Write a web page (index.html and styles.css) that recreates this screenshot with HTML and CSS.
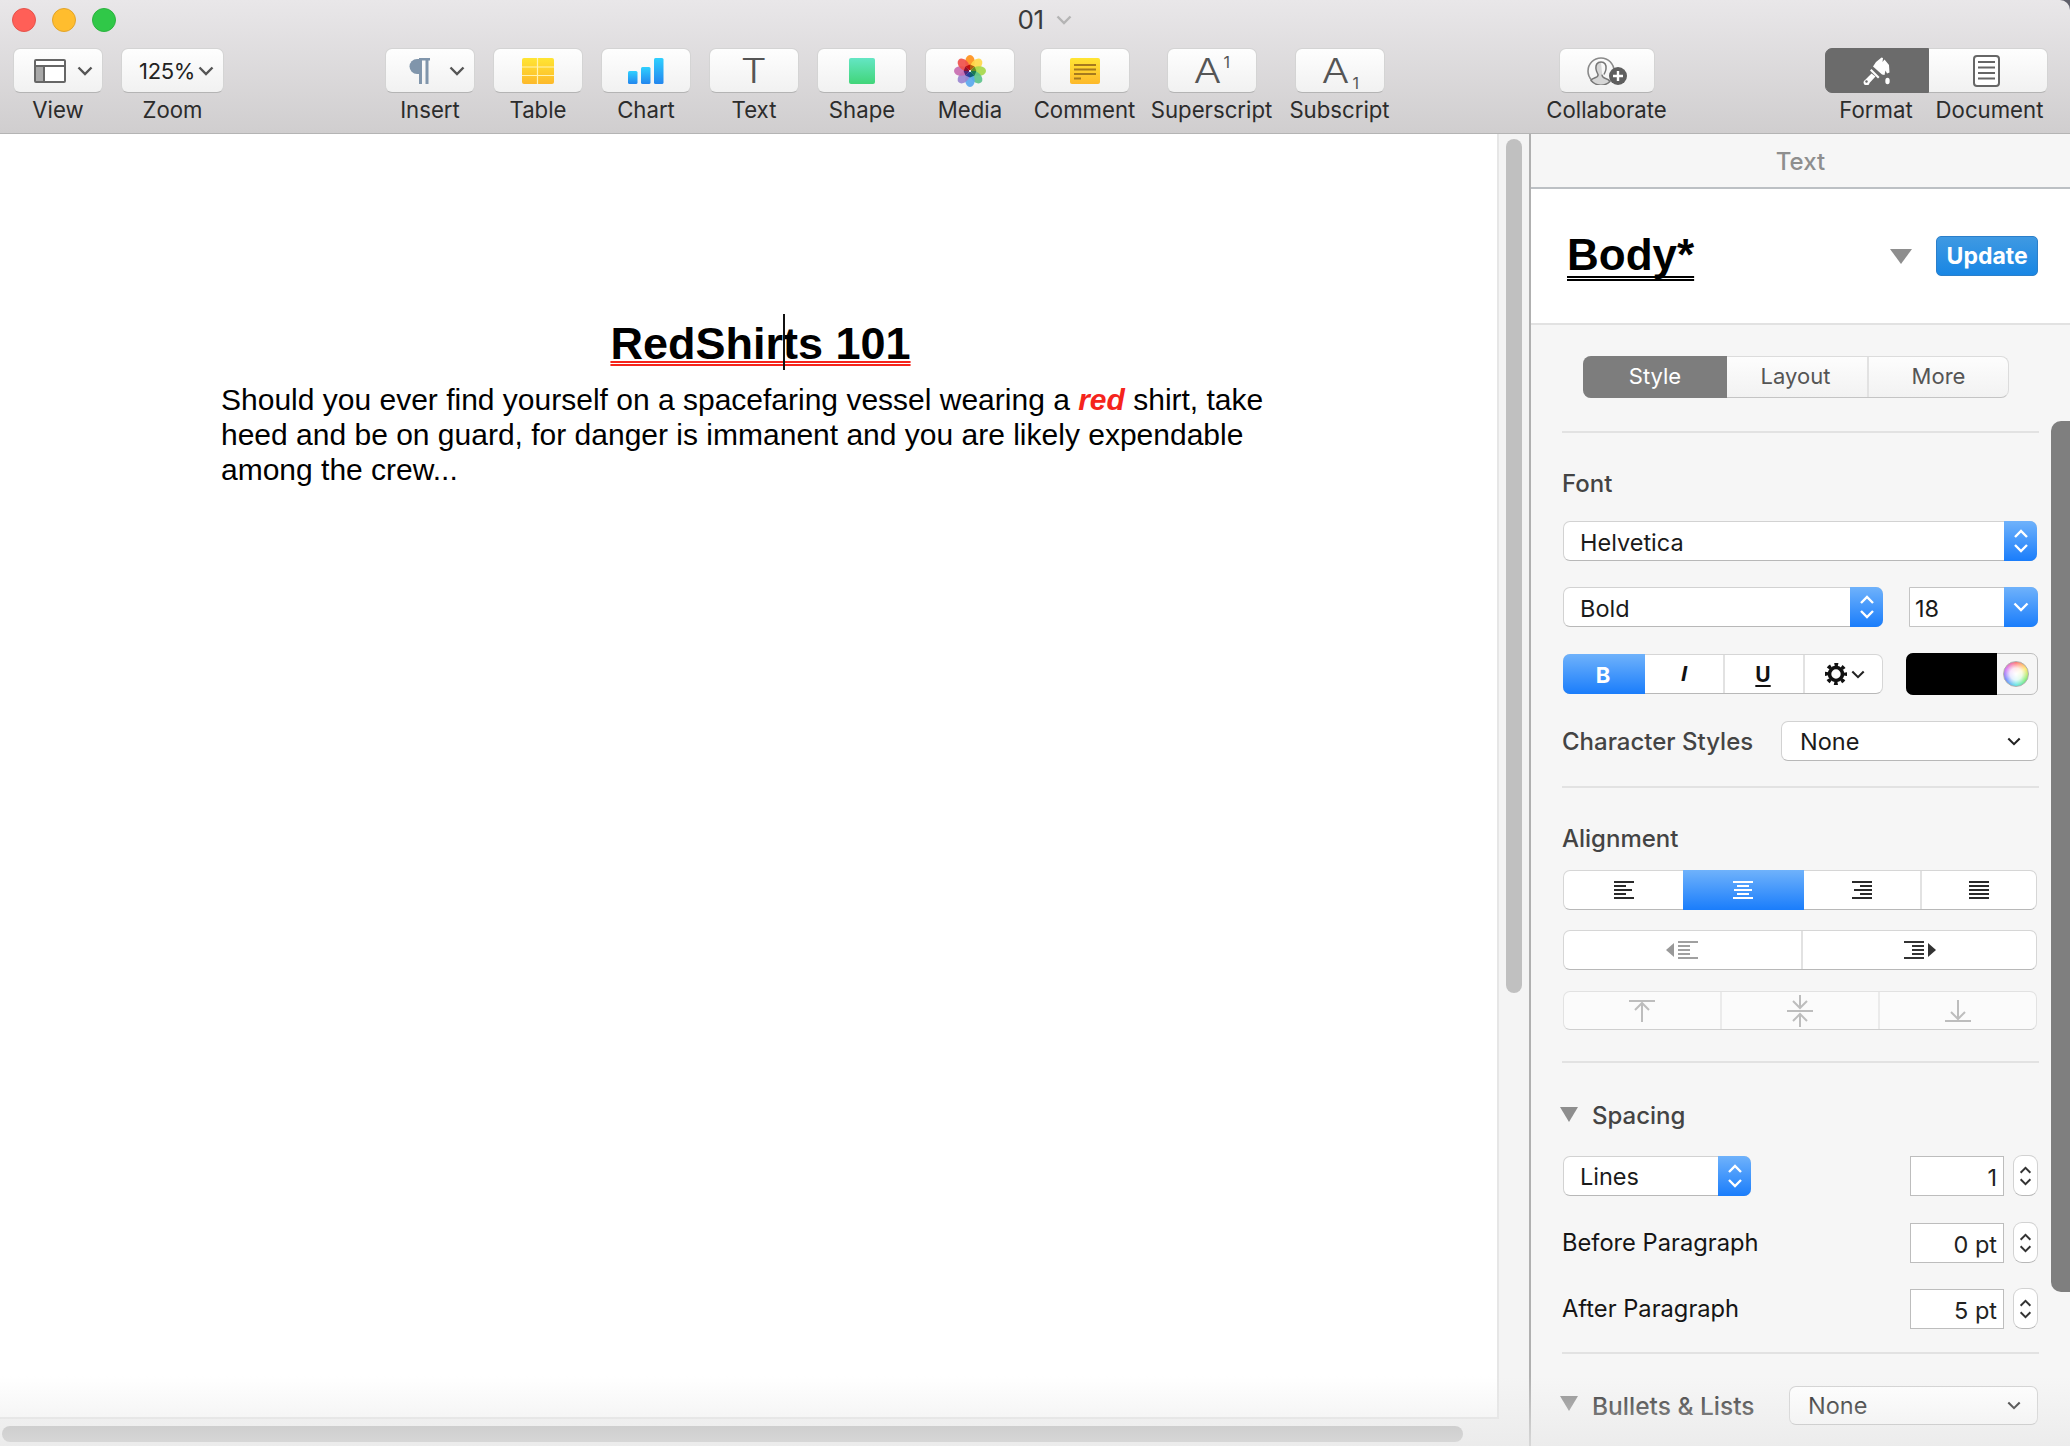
FILE: index.html
```html
<!DOCTYPE html>
<html lang="en">
<head>
<meta charset="utf-8">
<title>01</title>
<link rel="stylesheet" href="styles.css">
</head>
<body>
<svg class="defs" width="0" height="0" aria-hidden="true">
  <symbol id="chev" viewBox="0 0 16 10"><path d="M1.5 1.5 8 8l6.5-6.5" fill="none" stroke="currentColor" stroke-width="2.4"/></symbol>
  <symbol id="updown" viewBox="0 0 16 26"><path d="M2 9l6-6 6 6M2 17l6 6 6-6" fill="none" stroke="currentColor" stroke-width="2.4"/></symbol>
</svg>
<div class="window">
  <header class="toolbar">
    <div class="titlebar">
      <div class="lights"><i class="light l-red"></i><i class="light l-yellow"></i><i class="light l-green"></i></div>
      <div class="doc-title">01<svg class="title-chev"><use href="#chev"/></svg></div>
    </div>
    <div class="tools">
      <div class="tool view">
        <div class="btn btn-split">
          <svg class="ic-view" viewBox="0 0 32 24"><rect x="1" y="1" width="30" height="22" rx="1" fill="#fff" stroke="#666" stroke-width="2"/><rect x="2" y="7" width="8" height="15" fill="#a8a8a8"/><path d="M1 7h30M10 7v16" stroke="#666" stroke-width="2"/></svg>
          <svg class="chev"><use href="#chev"/></svg>
        </div>
        <span class="label">View</span>
      </div>
      <div class="tool zoom">
        <div class="btn btn-zoom"><span class="zoom-val">125%</span><svg class="chev"><use href="#chev"/></svg></div>
        <span class="label">Zoom</span>
      </div>
      <div class="tool insert">
        <div class="btn btn-split">
          <svg class="ic-para" viewBox="0 0 22 26"><path d="M10 1H8a7.500 7.500 0 0 0 0 15h2V1z" fill="#8095ab"/><path d="M10 1h11M11.500 1v25M18 1v25" stroke="#8095ab" stroke-width="3" fill="none"/></svg>
          <svg class="chev"><use href="#chev"/></svg>
        </div>
        <span class="label">Insert</span>
      </div>
      <div class="tool">
        <div class="btn"><svg class="ic-26" viewBox="0 0 32 26"><defs><linearGradient id="gy" x1="0" y1="0" x2="0" y2="1"><stop offset="0" stop-color="#ffe533"/><stop offset="1" stop-color="#fdb92b"/></linearGradient></defs><rect width="32" height="26" rx="2" fill="url(#gy)"/><path d="M0 9h32M0 17.500h32M15.500 0v26" stroke="#fff3b0" stroke-width="1.200"/></svg></div>
        <span class="label">Table</span>
      </div>
      <div class="tool">
        <div class="btn"><svg class="ic-26" viewBox="0 0 36 26"><defs><linearGradient id="gb" x1="0" y1="0" x2="0" y2="1"><stop offset="0" stop-color="#2fd0ff"/><stop offset="1" stop-color="#2386ee"/></linearGradient></defs><rect x="0" y="13" width="9.500" height="13" rx="1.500" fill="url(#gb)"/><rect x="13" y="9" width="9.500" height="17" rx="1.500" fill="url(#gb)"/><rect x="26" y="0" width="9.500" height="26" rx="1.500" fill="url(#gb)"/></svg></div>
        <span class="label">Chart</span>
      </div>
      <div class="tool">
        <div class="btn"><span class="glyph">T</span></div>
        <span class="label">Text</span>
      </div>
      <div class="tool">
        <div class="btn"><svg class="ic-26" viewBox="0 0 26 26"><defs><linearGradient id="gg" x1="0" y1="0" x2="0" y2="1"><stop offset="0" stop-color="#64e6c4"/><stop offset="1" stop-color="#41d579"/></linearGradient></defs><rect width="26" height="26" rx="2" fill="url(#gg)"/></svg></div>
        <span class="label">Shape</span>
      </div>
      <div class="tool">
        <div class="btn"><svg class="ic-media" viewBox="-15 -15 30 30">
          <ellipse cx="0" cy="-8.500" rx="4.500" ry="6.500" fill="#ff9a2e"/>
          <ellipse cx="0" cy="-8.500" rx="4.500" ry="6.500" fill="#ffd84a" transform="rotate(45)" opacity=".92"/>
          <ellipse cx="0" cy="-8.500" rx="4.500" ry="6.500" fill="#a6d84a" transform="rotate(90)" opacity=".92"/>
          <ellipse cx="0" cy="-8.500" rx="4.500" ry="6.500" fill="#5cc28a" transform="rotate(135)" opacity=".92"/>
          <ellipse cx="0" cy="-8.500" rx="4.500" ry="6.500" fill="#5aa8ee" transform="rotate(180)" opacity=".92"/>
          <ellipse cx="0" cy="-8.500" rx="4.500" ry="6.500" fill="#9a86d0" transform="rotate(225)" opacity=".92"/>
          <ellipse cx="0" cy="-8.500" rx="4.500" ry="6.500" fill="#c86cb0" transform="rotate(270)" opacity=".92"/>
          <ellipse cx="0" cy="-8.500" rx="4.500" ry="6.500" fill="#f0504a" transform="rotate(315)" opacity=".92"/>
          <path d="M0 0 0-6 4.200-4.200z" fill="#b05a10"/><path d="M0 0 4.200-4.200 6 0z" fill="#6a8a20"/><path d="M0 0 6 0 4.200 4.200z" fill="#1a7a50"/>
          <path d="M0 0-4.200-4.200 0-6z" fill="#c01010"/><path d="M0 0-6 0-4.200-4.200z" fill="#901030"/><path d="M0 0-4.200 4.200-6 0z" fill="#502878"/><path d="M0 0 0 6-4.200 4.200z" fill="#28409a"/><path d="M0 0 4.200 4.200 0 6z" fill="#106070"/>
          <circle r="1" fill="#fff"/></svg></div>
        <span class="label">Media</span>
      </div>
      <div class="tool comment">
        <div class="btn"><svg class="ic-26" viewBox="0 0 30 26"><rect width="30" height="26" rx="2" fill="url(#gy)"/><path d="M4 7h22M4 11.500h22M4 16h22M4 20.500h7" stroke="#a67a1e" stroke-width="2"/></svg></div>
        <span class="label">Comment</span>
      </div>
      <div class="tool sup">
        <div class="btn btn-aa"><span class="glyph">A</span><span class="small-1 up">1</span></div>
        <span class="label">Superscript</span>
      </div>
      <div class="tool sub">
        <div class="btn btn-aa"><span class="glyph">A</span><span class="small-1 down">1</span></div>
        <span class="label">Subscript</span>
      </div>
      <div class="tool collab">
        <div class="btn"><svg class="ic-collab" viewBox="0 0 40 28"><circle cx="14" cy="14" r="13" fill="none" stroke="#8a8a8a" stroke-width="1.600"/><path d="M14 5c-4 0-5.500 3-5 7 .3 2.500 1.500 4 2 5.500.3 1.500-1 2.500-3 3.200-2 .7-3.500 1.500-4 2.800A13 13 0 0 0 23 24.500c-1-1.500-3-2.600-5-3.300-2-.7-3.200-1.700-2.800-3.500" fill="#d6d6d6" stroke="#777" stroke-width="1.500"/><path d="M14 5c4 0 5.500 3 5 7-.3 2.500-1.500 4-2 5.500" fill="none" stroke="#777" stroke-width="1.500"/><circle cx="31" cy="19" r="9" fill="#5e5e5e"/><path d="M31 14v10M26 19h10" stroke="#fff" stroke-width="2.400"/></svg></div>
        <span class="label">Collaborate</span>
      </div>
      <div class="tool-pair">
        <div class="tool format">
          <div class="btn btn-dark"><svg class="ic-brush" viewBox="0 0 30 28"><path d="M14 5 19.500.5l1.500.5-.5 4 2-2.500L27 8l.5 7.500-2.500 1-1.500-3-1 4.500-2.500-.5L11 9.500z" fill="#fff"/><path d="M9.500 12l8 8-1.500 1.500-8-8z" fill="#fff"/><path d="M9.500 16.500 3 23a3 3 0 1 0 4.500 3l6-6.500z" fill="#fff"/><circle cx="4.500" cy="24.500" r="1.200" fill="#6b6b6b"/><ellipse cx="25.500" cy="24" rx="2.200" ry="3.200" fill="#fff"/></svg></div>
          <span class="label">Format</span>
        </div>
        <div class="tool document">
          <div class="btn btn-doc"><svg class="ic-doc" viewBox="0 0 27 32"><rect x="1" y="1" width="25" height="30" rx="3" fill="#fff" stroke="#666" stroke-width="2"/><path d="M5 7h17M5 12.500h17M5 18h17M5 23.500h17" stroke="#666" stroke-width="2"/></svg></div>
          <span class="label">Document</span>
        </div>
      </div>
    </div>
  </header>

  <main class="main">
    <section class="canvas-wrap">
      <div class="canvas">
        <h1 class="doc-h1">RedShir<span class="caret"></span>ts 101</h1>
        <p class="doc-p">Should you ever find yourself on a spacefaring vessel wearing a <em class="accent">red</em> shirt, take heed and be on guard, for danger is immanent and you are likely expendable among the crew...</p>
      </div>
      <div class="hscroll-track"><div class="hscroll"></div></div>
      <div class="vscroll"></div>
    </section>

    <aside class="inspector">
      <div class="insp-head">Text</div>
      <div class="style-head">
        <span class="style-name">Body*</span>
        <span class="tri tri-big"></span>
        <span class="update">Update</span>
      </div>
      <div class="panel">
        <div class="tabs">
          <span class="tab tab-on">Style</span><span class="tab tab-mid">Layout</span><span class="tab tab-last">More</span>
        </div>
        <hr class="rule rule-1">

        <div class="heading heading-font">Font</div>
        <div class="select sel-font"><span class="val">Helvetica</span><span class="blue blue-w33"><svg class="ud"><use href="#updown"/></svg></span></div>
        <div class="row row-style">
          <div class="select sel-weight"><span class="val">Bold</span><span class="blue blue-w33"><svg class="ud"><use href="#updown"/></svg></span></div>
          <div class="combo"><span class="combo-val">18</span><span class="blue blue-w34"><svg class="dn"><use href="#chev"/></svg></span></div>
        </div>
        <div class="row row-biu">
          <div class="seg seg-biu">
            <span class="cell cell-b active">B</span>
            <span class="cell cell-i">I</span>
            <span class="cell cell-u">U</span>
            <span class="cell cell-gear">
              <svg class="gear" viewBox="0 0 22 22"><circle cx="11" cy="11" r="6.500" fill="none" stroke="#111" stroke-width="3.600"/><circle cx="11" cy="11" r="9.500" fill="none" stroke="#111" stroke-width="3.400" stroke-dasharray="3.700 3.760" stroke-dashoffset="1.850"/></svg>
              <svg class="chev-dark"><use href="#chev"/></svg>
            </span>
          </div>
          <div class="well"><span class="swatch"></span><span class="wheel-box"><span class="wheel"></span></span></div>
        </div>
        <div class="row row-char">
          <span class="heading-inline">Character Styles</span>
          <div class="select sel-plain sel-char"><span class="val val-none">None</span><svg class="chev-dark chev-end"><use href="#chev"/></svg></div>
        </div>
        <hr class="rule rule-2">

        <div class="heading heading-align">Alignment</div>
        <div class="seg seg-align">
          <span class="cell c-a1"><svg class="lines" viewBox="0 0 20 18"><path d="M0 1h20M0 5h12M0 9h18M0 13h12M0 17h20" stroke="#2a2a2a" stroke-width="2"/></svg></span>
          <span class="cell c-a2 active"><svg class="lines" viewBox="0 0 20 18"><path d="M0 1h20M4 5h12M1 9h18M4 13h12M0 17h20" stroke="#fff" stroke-width="2"/></svg></span>
          <span class="cell c-a3"><svg class="lines" viewBox="0 0 20 18"><path d="M0 1h20M8 5h12M2 9h18M8 13h12M0 17h20" stroke="#2a2a2a" stroke-width="2"/></svg></span>
          <span class="cell c-a4"><svg class="lines" viewBox="0 0 20 18"><path d="M0 1h20M0 5h20M0 9h20M0 13h20M0 17h20" stroke="#2a2a2a" stroke-width="2"/></svg></span>
        </div>
        <div class="seg seg-indent">
          <span class="cell c-in1"><svg class="indent" viewBox="0 0 32 18"><path d="M8 2v14L0 9z" fill="#999"/><path d="M12 1h20M12 5h12M12 9h12M12 13h12M12 17h20" stroke="#a0a0a0" stroke-width="2"/></svg></span>
          <span class="cell c-in2"><svg class="indent" viewBox="0 0 32 18"><path d="M24 2v14l8-7z" fill="#333"/><path d="M0 1h20M8 5h12M8 9h12M8 13h12M0 17h20" stroke="#333" stroke-width="2"/></svg></span>
        </div>
        <div class="seg seg-valign">
          <span class="cell"><svg class="vicon" viewBox="0 0 26 22"><path d="M0 1h26M13 3v19M6 10l7-7 7 7" fill="none" stroke="#bdbdbd" stroke-width="2"/></svg></span>
          <span class="cell"><svg class="vicon vicon-tall" viewBox="0 0 26 32"><path d="M0 16h26M13 0v13M6 6l7 7 7-7M13 19v13M6 26l7-7 7 7" fill="none" stroke="#bdbdbd" stroke-width="2"/></svg></span>
          <span class="cell"><svg class="vicon" viewBox="0 0 26 22"><path d="M0 21h26M13 0v19M6 12l7 7 7-7" fill="none" stroke="#bdbdbd" stroke-width="2"/></svg></span>
        </div>
        <hr class="rule rule-3">

        <div class="heading heading-spacing"><span class="tri"></span>Spacing</div>
        <div class="row row-lines">
          <div class="select sel-lines"><span class="val">Lines</span><span class="blue blue-w33"><svg class="ud"><use href="#updown"/></svg></span></div>
          <div class="num-wrap"><span class="num">1</span><span class="stepper"><svg class="ud-dark"><use href="#updown"/></svg></span></div>
        </div>
        <div class="row row-before">
          <span class="plain-label">Before Paragraph</span>
          <div class="num-wrap"><span class="num">0 pt</span><span class="stepper"><svg class="ud-dark"><use href="#updown"/></svg></span></div>
        </div>
        <div class="row row-after">
          <span class="plain-label">After Paragraph</span>
          <div class="num-wrap"><span class="num">5 pt</span><span class="stepper"><svg class="ud-dark"><use href="#updown"/></svg></span></div>
        </div>
        <hr class="rule rule-4">

        <div class="row row-bullets">
          <div class="heading heading-bullets"><span class="tri"></span>Bullets &amp; Lists</div>
          <div class="select sel-plain sel-bullets"><span class="val val-none">None</span><svg class="chev-dark chev-end"><use href="#chev"/></svg></div>
        </div>
      </div>
      <div class="insp-scroll"></div>
    </aside>
  </main>
  <div class="bottom-fade"></div>
</div>
</body>
</html>
```

FILE: styles.css
```css
* { box-sizing: border-box; }
html, body { margin: 0; padding: 0; height: 100%; overflow: hidden; background: #fff; }
body { font-family: "Inter", "Liberation Sans", sans-serif; color: #222; }
.defs { position: absolute; }
.window { position: relative; width: 2070px; height: 1446px; display: flex; flex-direction: column; overflow: hidden; background: #5f5f6a; }

/* Toolbar */
.toolbar { height: 134px; flex: none; background: linear-gradient(#e9e7e9, #d0cecf); border-bottom: 1px solid #b4b4b4; border-top-right-radius: 10px; }
.titlebar { height: 48px; display: flex; align-items: flex-start; }
.lights { display: flex; gap: 16px; margin: 8px 0 0 12px; }
.light { width: 24px; height: 24px; border-radius: 50%; display: block; border: 1px solid; }
.l-red { background: #ff5f57; border-color: #e5534b; }
.l-yellow { background: #ffbd2e; border-color: #e2a42a; }
.l-green { background: #30c848; border-color: #2cb33f; }
.doc-title { margin: 3px 0 0 901.500px; font-size: 26px; line-height: 34px; color: #3a3a3a; display: flex; align-items: center; letter-spacing: -.3px; }
.title-chev { width: 16px; height: 10px; margin-left: 12px; color: #b4b4b4; }

.tools { display: flex; padding-left: 13px; }
.tool { width: 90px; flex: none; margin-left: 18px; display: flex; flex-direction: column; align-items: center; }
.tool.view { margin-left: 0; }
.tool.zoom { width: 103px; margin-left: 18px; }
.tool.insert { margin-left: 161px; }
.tool.comment { margin-left: 24.500px; }
.tool.sup { margin-left: 37px; }
.tool.sub { margin-left: 38px; }
.tool.collab { width: 96px; margin-left: 174px; }
.tool-pair { display: flex; margin-left: 170.500px; }
.tool.format { width: 104px; margin-left: 0; }
.tool.document { width: 119px; margin-left: 0; }
.tool.format .label { margin-left: -2px; }
.tool.document .label { margin-left: 2px; }

.btn { width: 100%; height: 45px; flex: none; display: flex; align-items: center; justify-content: center; background: linear-gradient(#fefefe, #f1f1f1); border-radius: 7px; border: 1px solid #d4d4d4; border-bottom-color: #b4b4b4; }
.label { margin-top: 2px; font-size: 22.200px; line-height: 30px; white-space: nowrap; color: #2c2c2c; }
.btn-split { justify-content: flex-start; padding-left: 20px; }
.btn-split .chev { margin-left: auto; margin-right: 9px; }
.chev { width: 16px; height: 10px; color: #555; }
.ic-view { width: 32px; height: 24px; }
.ic-para { width: 22px; height: 26px; margin-left: 3px; }
.btn-zoom { justify-content: flex-start; padding-left: 17px; }
.zoom-val { font-size: 22px; line-height: 30px; color: #222; letter-spacing: -.3px; }
.btn-zoom .chev { margin-left: 3px; margin-top: 1px; }
.ic-26 { height: 26px; width: auto; max-width: 36px; }
.glyph { display: block; font-size: 34px; font-weight: 300; line-height: 34px; color: #555; transform: scaleX(1.2); }
.ic-media { width: 32px; height: 32px; }
.btn-aa { position: relative; padding-right: 9px; }
.small-1 { position: absolute; font-size: 16px; line-height: 16px; color: #555; }
.small-1.up { left: 56px; top: 5px; }
.small-1.down { left: 57px; top: 26px; }
.ic-collab { width: 40px; height: 28px; }
.btn-dark { background: #6b6b6b; border-color: #6b6b6b; border-radius: 7px 0 0 7px; }
.btn-doc { border-left: 0; border-radius: 0 7px 7px 0; padding-right: 4px; }
.ic-brush { width: 30px; height: 28px; }
.ic-doc { width: 27px; height: 32px; }

/* Main */
.main { flex: 1; display: flex; min-height: 0; }
.canvas-wrap { width: 1529px; position: relative; background: #f4f4f4; flex: none; }
.canvas { width: 1499px; height: 1285px; background: #fff; border-right: 2px solid #e6e6e6; border-bottom: 2px solid #e6e6e6; padding: 184px 197px 0 221px; }
.doc-h1 { margin: 0; font: 700 45px/52px "Liberation Sans", Arial, sans-serif; color: #000; text-align: center; text-decoration: underline double #f5241c; text-decoration-thickness: 2px; text-underline-offset: 2px; text-decoration-skip-ink: none; }
.caret { display: inline-block; width: 0; height: 0; position: relative; }
.caret::after { content: ""; position: absolute; left: 0; bottom: -11px; width: 2px; height: 56px; background: #111; }
.doc-p { margin: 12px 0 0; font: 400 30px/35px "Liberation Sans", Arial, sans-serif; color: #000; }
.accent { color: #f5241c; font-weight: 700; font-style: italic; }
.vscroll { position: absolute; left: 1506px; top: 5px; width: 16px; height: 854px; border-radius: 8px; background: #c0c0c0; }
.hscroll-track { height: 27px; padding: 7px 0 0 2px; }
.hscroll { width: 1461px; height: 16px; border-radius: 8px; background: #b4b4b4; }

/* Inspector */
.inspector { flex: 1; position: relative; overflow: hidden; border-left: 2px solid #b0b0b0; background: #f6f6f6; }
.insp-head { height: 55px; border-bottom: 2px solid #bcc0c4; text-align: center; font-size: 24px; line-height: 55px; color: #8e8e8e; font-weight: 500; }
.style-head { height: 136px; background: #fff; border-bottom: 2px solid #e2e2e2; display: flex; align-items: flex-start; padding-left: 36px; }
.style-name { margin-top: 40px; font: 700 44px/52px "Liberation Sans", Arial, sans-serif; color: #000; text-decoration: underline double #000; text-decoration-thickness: 2px; text-underline-offset: 6px; text-decoration-skip-ink: none; }
.tri { display: inline-block; width: 0; height: 0; border-left: 9px solid transparent; border-right: 9px solid transparent; border-top: 15px solid #8e8e8e; }
.tri-big { border-left-width: 11px; border-right-width: 11px; margin: 60px 0 0 196px; }
.update { margin: 47px 0 0 24px; width: 102px; height: 40px; border-radius: 5px; border: 1px solid #2b7fca; background: linear-gradient(#3f99e2, #1886e4); color: #fff; font-size: 23px; font-weight: 700; line-height: 39px; text-align: center; }

.panel { padding: 31px 32px 0; }
.tabs { width: 426px; height: 42px; margin-left: 20px; display: flex; font-size: 22px; line-height: 38px; color: #555; background: linear-gradient(#fdfdfd, #f2f2f2); border: 1px solid #dcdcdc; border-bottom-color: #c4c4c4; border-radius: 8px; }
.tab { text-align: center; flex: none; }
.tab-on { width: 144px; margin: -1px 0 -1px -1px; line-height: 40px; background: #7d7d7d; color: #fff; border-radius: 8px 0 0 8px; }
.tab-mid { width: 142px; border-right: 2px solid #e2e2e2; padding-right: 3px; }
.tab-last { width: 139px; }
.rule { height: 2px; border: 0; margin: 0 -1px; background: #e2e2e2; }
.rule-1 { margin-top: 33px; }
.rule-2 { margin-top: 25px; }
.rule-3 { margin-top: 31px; }
.rule-4 { margin-top: 23px; }

.heading { font-size: 24px; line-height: 30px; font-weight: 500; color: #444; display: flex; align-items: center; }
.heading-font { margin-top: 36px; margin-left: -1px; margin-bottom: -2px; }
.heading-align { margin-top: 36px; margin-left: -1px; margin-bottom: -1px; }
.heading-spacing { margin-top: 38px; margin-left: -3px; }
.heading-bullets { margin-left: -3px; color: #303030; font-size: 24.500px; }
.heading .tri { margin-right: 14px; margin-top: -4px; }
.heading-inline { font-size: 24px; line-height: 30px; font-weight: 500; color: #444; margin-left: -1px; padding-top: 1px; }
.plain-label { font-size: 23.700px; line-height: 30px; color: #151515; margin-left: -1px; }

.row { display: flex; justify-content: space-between; align-items: center; }
.select { height: 40px; display: flex; align-items: center; background: #fff; border: 1px solid #d2d2d2; border-bottom-color: #b8b8b8; border-radius: 7px; font-size: 23.500px; }
.val { padding-left: 16px; flex: 1; color: #1a1a1a; padding-top: 2px; }
.blue { align-self: stretch; margin: -1px -1px -1px 0; display: flex; align-items: center; justify-content: center; color: #fff; background: linear-gradient(#6fb2fb, #1a7dfb); border-radius: 0 7px 7px 0; flex: none; }
.blue-w33 { width: 33px; }
.blue-w34 { width: 34px; }
.ud { width: 16px; height: 26px; }
.dn { width: 16px; height: 10px; }
.sel-font { margin-top: 24px; width: 474px; }
.row-style { margin-top: 26px; }
.sel-weight { width: 320px; }
.combo { width: 129px; height: 40px; display: flex; align-items: center; background: #fff; border: 1px solid #c4c4c4; border-radius: 0 7px 7px 0; font-size: 23.500px; }
.combo-val { flex: 1; padding: 2px 0 0 5px; color: #1a1a1a; }

.row-biu { margin-top: 26px; height: 42px; }
.seg { display: flex; background: #fff; border: 1px solid #d6d6d6; border-bottom-color: #b8b8b8; border-radius: 7px; }
.cell { display: flex; align-items: center; justify-content: center; flex: 1 1 0; min-width: 0; border-left: 2px solid #e2e2e2; }
.cell:first-child { border-left: 0; }
.cell.active { background: linear-gradient(#6fb2fb, #1a7dfb); color: #fff; margin: -1px 0; border-left: 0; }
.cell.active + .cell { border-left: 0; }
.seg-biu { width: 320px; height: 40px; }
.cell-b { flex: none; width: 82px; margin-left: -1px !important; border-radius: 7px 0 0 7px; font-size: 22px; font-weight: 700; padding: 1px 2px 0 0; }
.cell-i { flex: none; width: 78px; font: italic 700 22px "Liberation Sans", sans-serif; color: #111; }
.cell-u { flex: none; width: 80px; font: 700 21px "Inter", sans-serif; color: #111; text-decoration: underline; text-underline-offset: 3px; text-decoration-thickness: 2px; padding-right: 2px; }
.cell-gear { flex: 1; gap: 4px; padding-left: 3px; }
.gear { width: 22px; height: 22px; }
.chev-dark { width: 14px; height: 9px; color: #222; flex: none; }
.well { width: 132px; height: 42px; display: flex; border: 1px solid #bdbdbd; border-radius: 7px; background: #f6f6f6; }
.swatch { width: 91px; margin: -1px 0 -1px -1px; background: #000; border-radius: 7px 0 0 7px; }
.wheel-box { flex: 1; display: flex; align-items: center; justify-content: center; padding-right: 2px; }
.wheel { width: 26px; height: 26px; border-radius: 50%; background: radial-gradient(circle, #fff 0, rgba(255,255,255,.85) 35%, rgba(255,255,255,0) 75%), conic-gradient(#ff5f5f, #ffe14d, #6bea5c, #46e0e0, #5a78ff, #d25cf0, #ff5f5f); border: 1px solid #b0b0b0; }
.row-char { margin-top: 26px; height: 40px; }
.sel-plain { padding-right: 16px; }
.sel-char { width: 257px; }
.sel-bullets { width: 249px; height: 39px; }
.val-none { padding-left: 18px; padding-top: 0; }
.seg-align { margin-top: 17px; height: 40px; width: 474px; }
.seg-align .cell { flex: none; }
.c-a1 { width: 119px; }
.c-a2 { width: 120.500px; }
.c-a3 { width: 116px; }
.c-a4 { width: 117px; }
.lines { width: 20px; height: 18px; }
.seg-indent { margin-top: 20px; height: 40px; width: 474px; }
.seg-indent .c-in1 { flex: none; width: 237px; padding-right: 2px; }
.indent { width: 32px; height: 18px; }
.seg-valign { margin-top: 21px; height: 39px; width: 474px; background: #fbfbfb; border-color: #e2e2e2; border-bottom-color: #cfcfcf; }
.seg-valign .cell { border-left-color: #ebebeb; }
.vicon { width: 26px; height: 22px; margin-top: 1px; }
.vicon-tall { height: 32px; margin-top: 0; }

.row-lines { margin-top: 24px; height: 41px; }
.sel-lines { width: 188px; }
.row-before { margin-top: 26px; height: 41px; }
.row-after { margin-top: 25px; height: 41px; }
.num-wrap { display: flex; align-items: center; gap: 9px; }
.num { width: 94px; height: 40px; background: #fff; border: 1px solid #bdbdbd; font-size: 23.500px; line-height: 42px; text-align: right; padding-right: 6px; color: #222; }
.stepper { width: 25px; height: 41px; display: flex; align-items: center; justify-content: center; background: #fff; border: 1px solid #d2d2d2; border-bottom-color: #b8b8b8; border-radius: 9px; color: #333; }
.ud-dark { width: 13px; height: 24px; }
.row-bullets { margin-top: 32px; height: 39px; }
.insp-scroll { position: absolute; right: 0; top: 287px; width: 19px; height: 871px; background: #7f7f7f; border-radius: 10px 0 0 10px; }

.bottom-fade { position: absolute; left: 0; right: 0; bottom: 0; height: 70px; background: linear-gradient(rgba(232,232,232,0), rgba(232,232,232,.7)); pointer-events: none; }
```
